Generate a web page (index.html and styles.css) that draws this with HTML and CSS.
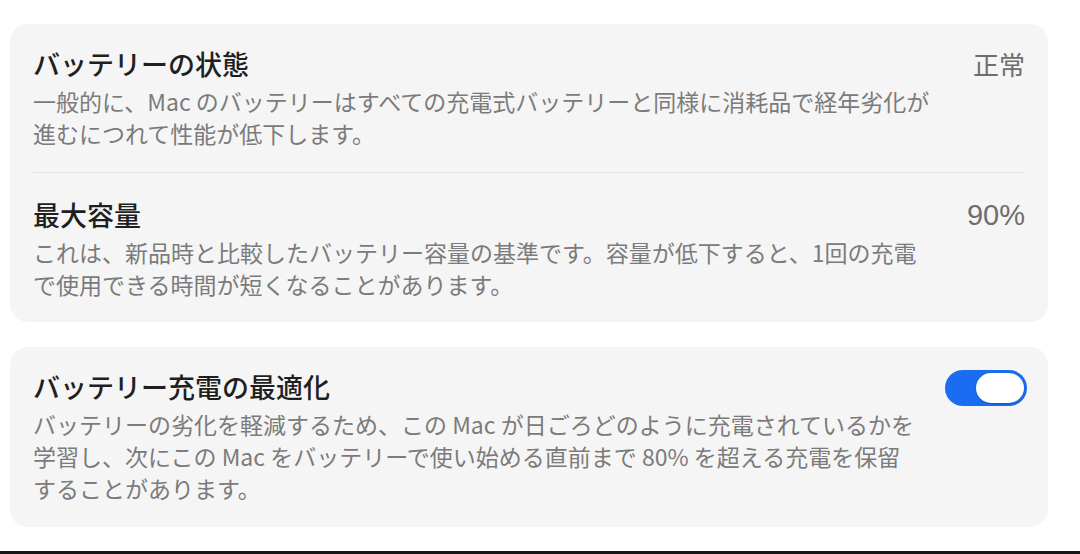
FILE: index.html
```html
<!DOCTYPE html>
<html lang="ja">
<head>
  <meta charset="UTF-8" />
  <title>バッテリー</title>
  <meta name="viewport" content="width=device-width, initial-scale=1.0" />
  <link rel="stylesheet" href="styles.css">
</head>
<body>
  <div class="pane">
    <section class="card">
      <div class="row">
        <div class="info">
          <h2 class="title">バッテリーの状態</h2>
          <p class="desc">一般的に、Mac のバッテリーはすべての充電式バッテリーと同様に消耗品で経年劣化が<br>進むにつれて性能が低下します。</p>
        </div>
        <div class="value">正常</div>
      </div>
      <div class="row">
        <div class="info">
          <h2 class="title">最大容量</h2>
          <p class="desc">これは、新品時と比較したバッテリー容量の基準です。容量が低下すると、1回の充電<br>で使用できる時間が短くなることがあります。</p>
        </div>
        <div class="value num">90%</div>
      </div>
    </section>

    <section class="card">
      <div class="row">
        <div class="info">
          <h2 class="title">バッテリー充電の最適化</h2>
          <p class="desc">バッテリーの劣化を軽減するため、この Mac が日ごろどのように充電されているかを<br>学習し、次にこの Mac をバッテリーで使い始める直前まで 80% を超える充電を保留<br>することがあります。</p>
        </div>
        <button class="toggle on" aria-label="バッテリー充電の最適化"><span class="knob"></span></button>
      </div>
    </section>
  </div>
</body>
</html>
```

FILE: styles.css
```css
html, body {
  margin: 0;
  padding: 0;
  background: #fff;
}
body {
  font-family: "Noto Sans CJK JP", "Noto Sans", sans-serif;
  height: 554px;
  box-sizing: border-box;
  border-bottom: 3px solid #161616;
  overflow: hidden;
}
.pane {
  padding: 24px 32px 0 10px;
  display: flex;
  flex-direction: column;
  gap: 25px;
}
.card {
  background: #f5f5f5;
  border-radius: 18px;
  padding: 0 23px;
}
.row {
  display: flex;
  justify-content: space-between;
  align-items: flex-start;
  padding: 23px 0 23px;
}
.row + .row {
  border-top: 1px solid #e3e3e3;
  padding-top: 25px;
  padding-bottom: 22px;
}
.title {
  margin: 0;
  font-size: 27px;
  line-height: 34px;
  font-weight: 500;
  color: #1f1f1f;
}
.desc {
  margin: 4px 0 0;
  font-size: 23px;
  line-height: 32px;
  color: #7b7b7b;
}
.value {
  font-size: 26px;
  line-height: 34px;
  color: #6e6e6e;
}
.value.num {
  font-family: "Liberation Sans", "Noto Sans CJK JP", sans-serif;
  font-size: 29px;
}
.toggle {
  margin: 0 -2px 0 0;
  padding: 3px;
  width: 82px;
  height: 36px;
  border: none;
  border-radius: 18px;
  background: #d0d0d0;
  display: flex;
  justify-content: flex-start;
  cursor: pointer;
}
.toggle.on {
  background: #1a6cf0;
  justify-content: flex-end;
}
.knob {
  width: 48px;
  height: 30px;
  border-radius: 15px;
  background: #fff;
  box-shadow: 0 1px 2px rgba(0,0,0,0.2);
}
```
